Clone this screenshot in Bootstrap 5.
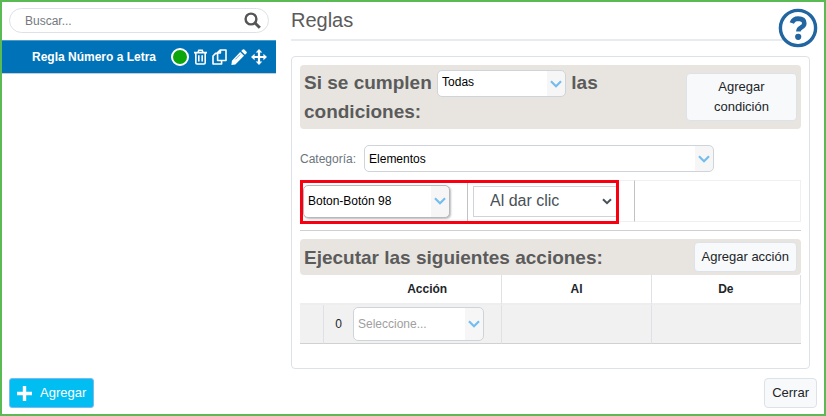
<!DOCTYPE html>
<html lang="es">
<head>
<meta charset="utf-8">
<meta name="viewport" content="width=device-width, initial-scale=1">
<title>Reglas</title>
<link href="https://cdn.jsdelivr.net/npm/bootstrap@5.3.0/dist/css/bootstrap.min.css" rel="stylesheet">
<style>
body { font-family: "Liberation Sans", Arial, sans-serif; font-size: 12px; line-height: 18px; color: #212529; }
.frame { border: 2px solid #5abb55; }
.side { padding-top: 6px; }
.search-box { margin: 0 7px; border: 1px solid #dee2e6; height: 25px; padding: 0 7px 0 15px; }
.search-box input { font-size: 12px; color: #6c757d; outline: 0; min-width: 0; }
.search-box input::placeholder { color: #75797d; opacity: 1; }
.rule-item { margin-top: 7px; height: 34px; background: #0072b8; border-top: 1px solid #4a9aca; border-bottom: 1px solid #c5cbd0; padding: 0 9px 0 30px; }
.icon-btn { background: none; border: 0; padding: 0; color: #fff; line-height: 0; }
.state-dot { width: 18px; height: 18px; border-radius: 50%; border: 2px solid #fff; background: #0ca50c; }
.btn-add { background: #00bdf2; border: 1px solid #7fb8f0; border-radius: 3px; color: #fff; font-size: 13px; line-height: 18px; padding: 5px 7px; }
.btn-soft { background: #f8f9fa; border: 1px solid #dde2e8; border-radius: 4px; color: #212529; font-size: 13px; line-height: 20px; padding: 4px 7px; }
.btn-wrap { width: 111px; padding: 3px 16px; }
.main { padding: 0 14px 0 15px; }
.title { font-size: 20px; line-height: 24px; color: #5b5b5b; border-bottom: 2px solid #e9ecef; padding: 6px 0 7px; margin: 0 24px 15px 0; font-weight: 400; }
.help { position: absolute; top: 6px; right: 6px; color: #2166a0; }
.panel { border: 1px solid #dee2e6; border-radius: 4px; padding: 8px 8px 24px; }
.bar { background: #e8e5e0; border-radius: 4px; padding: 3px 4px; }
.bar h2 { font-size: 19px; line-height: 29px; font-weight: 700; color: #5b5b5b; margin: 0; }
.pick { appearance: none; border: 1px solid #ced4da; border-radius: 5px; font-size: 12px; line-height: 16px; padding: 0 24px 0 4px; height: 27px; color: #000; vertical-align: middle;
  background: url("data:image/svg+xml,%3Csvg xmlns='http://www.w3.org/2000/svg' viewBox='0 0 12 8'%3E%3Cpath d='M1 1.200l5 5 5-5' fill='none' stroke='%2374bdee' stroke-width='2.200'/%3E%3C/svg%3E") no-repeat right 3px center / 12px 8px, linear-gradient(#f6f6f6, #f6f6f6) no-repeat right / 18px 100%, #fff; }
.pick-all { width: 129px; font-weight: 400; padding-bottom: 3px; }
.pick-cat { width: 350px; }
.pick-el { width: 147px; height: 33px; border-color: #b5b9bd; box-shadow: 1px 1px 2px #bbb; }
.pick-act { width: 131px; height: 34px; color: #a0a0a0; }
.pick-event { appearance: none; width: 146px; height: 31px; border: 1px solid #ced4da; font-size: 16px; color: #495057; padding: 0 16px;
  background: url("data:image/svg+xml,%3Csvg xmlns='http://www.w3.org/2000/svg' viewBox='0 0 10 7'%3E%3Cpath d='M1 1.200l4 4 4-4' fill='none' stroke='%23495057' stroke-width='2'/%3E%3C/svg%3E") no-repeat right 6px center / 10px 7px #fff; }
.cat-row { color: #6c757d; padding: 16px 0 8px; }
.conditions { border-bottom: 1px solid #ced0d2; padding-bottom: 8px; margin-bottom: 8px; }
.grid-table { table-layout: fixed; width: 100%; border-collapse: separate; border-spacing: 0; }
.cond-cell { height: 42px; padding: 0 5px; border: 1px solid #f0f0f0; border-left-color: #c0c2c4; border-right: 0; }
.cond-cell:first-child { border-left: 0; padding-left: 3px; }
.cond-cell:last-child { border-right: 1px solid #f0f0f0; }
.highlight { position: absolute; top: 0; left: 0; width: 319px; height: 44px; border: 3px solid #f80010; pointer-events: none; }
.actions-table th { height: 30px; padding: 0; text-align: center; border-right: 1px solid #dee2e6; border-bottom: 2px solid #eee; }
.actions-table td { height: 39px; background: #f1f1f1; border-right: 1px solid #dee2e6; border-bottom: 1px solid #cfd1d3; padding: 0; }
.actions-table .flush { border-right: 0; }
.c-handle { width: 24px; } .c-index { width: 29px; }
.foot { padding: 8px 7px 6px; }
</style>
</head>
<body>
<div class="frame min-vh-100 d-flex flex-column position-relative">
  <div class="row g-0 flex-grow-1">
    <aside class="col-4 side">
      <div class="search-box rounded-pill d-flex align-items-center">
        <input class="border-0 bg-transparent flex-grow-1 p-0" type="search" placeholder="Buscar..." aria-label="Buscar">
        <button class="icon-btn" type="button" aria-label="Buscar"><svg width="17" height="17" viewBox="0 0 17 17" fill="none" stroke="#555"><circle cx="7" cy="7" r="5.400" stroke-width="2.400"/><path d="M11 11l4.800 4.800" stroke-width="3"/></svg></button>
      </div>
      <div class="rule-item d-flex align-items-center text-white">
        <strong class="flex-grow-1 text-nowrap">Regla Número a Letra</strong>
        <div class="d-flex align-items-center gap-1">
          <span class="state-dot"></span>
          <button class="icon-btn" type="button" aria-label="Eliminar"><svg width="15" height="16" viewBox="0 0 15 16" fill="none" stroke="currentColor" stroke-width="1.6"><path d="M1 3.6h13M5 3.4l.8-2.2h3.400l.8 2.2M2.800 3.800v10q0 1.200 1.200 1.200h7q1.200 0 1.200-1.200v-10M5.800 6.200v6.200M9.200 6.200v6.200"/></svg></button>
          <button class="icon-btn" type="button" aria-label="Copiar"><svg width="15" height="16" viewBox="0 0 15 16" fill="none" stroke="currentColor" stroke-width="1.6" stroke-linejoin="round"><path d="M8.200 1H14v10.500H5.600V3.600zM8.400 1v3H5.600M5.400 4.400H3.600L1 7v8h8.600v-3.200"/></svg></button>
          <button class="icon-btn" type="button" aria-label="Editar"><svg width="16" height="16" viewBox="0 0 16 16" fill="currentColor"><path d="M9.200 3l3.800 3.800-8.600 8.600-4 .5.5-4.200zM10.200 2l1.500-1.500q.8-.7 1.600 0l2.200 2.200q.7.8 0 1.600L14 5.800z"/><path d="M4.300 10.400l4.900-4.900" stroke="#0072b8" stroke-width=".6"/></svg></button>
          <button class="icon-btn" type="button" aria-label="Mover"><svg width="16" height="16" viewBox="0 0 16 16" fill="currentColor"><path d="M8 0l3.300 3.600H9.100v3.300h3.300V4.700L16 8l-3.600 3.300V9.100H9.100v3.300h2.200L8 16l-3.300-3.600h2.200V9.100H3.600v2.200L0 8l3.600-3.300v2.200h3.300V3.600H4.700z"/></svg></button>
        </div>
      </div>
    </aside>
    <main class="col-8 main">
      <h1 class="title">Reglas</h1>
      <button class="icon-btn help" type="button" aria-label="Ayuda"><svg width="40" height="40" viewBox="0 0 40 40" fill="none" stroke="currentColor"><circle cx="20" cy="20" r="17.600" fill="#fff" stroke-width="3.400"/><path d="M13.800 15q1.800-4.400 6.300-4.400 6.200.2 6.200 4.600 0 2.600-3.200 4.400Q20.400 21 20.400 23.600" stroke-width="4.600"/><circle cx="20.200" cy="28.800" r="3.100" fill="currentColor" stroke="none"/></svg></button>
      <section class="panel">
        <div class="bar d-flex align-items-center justify-content-between">
          <h2><label for="match">Si se cumplen</label> <select id="match" class="pick pick-all"><option>Todas</option></select> las<br>condiciones:</h2>
          <button class="btn btn-soft btn-wrap" type="button">Agregar condición</button>
        </div>
        <div class="cat-row d-flex align-items-center gap-2">
          <label for="category">Categoría:</label>
          <select id="category" class="pick pick-cat"><option>Elementos</option></select>
        </div>
        <div class="conditions position-relative">
          <table class="grid-table">
            <tbody><tr>
              <td class="cond-cell"><select class="pick pick-el" aria-label="Elemento"><option>Boton-Botón 98</option></select></td>
              <td class="cond-cell"><select class="pick-event" aria-label="Evento"><option>Al dar clic</option></select></td>
              <td class="cond-cell"></td>
            </tr></tbody>
          </table>
          <div class="highlight"></div>
        </div>
        <div class="bar d-flex align-items-center justify-content-between">
          <h2>Ejecutar las siguientes acciones:</h2>
          <button class="btn btn-soft" type="button">Agregar acción</button>
        </div>
        <table class="grid-table actions-table">
          <colgroup><col class="c-handle"><col class="c-index"><col><col><col></colgroup>
          <thead><tr><th class="flush"></th><th class="flush"></th><th>Acción</th><th>Al</th><th>De</th></tr></thead>
          <tbody><tr><td></td><td class="flush text-center">0</td><td><select class="pick pick-act" aria-label="Acción"><option>Seleccione...</option></select></td><td></td><td class="flush"></td></tr></tbody>
        </table>
      </section>
    </main>
  </div>
  <footer class="foot d-flex justify-content-between align-items-center">
    <button class="btn btn-add d-flex align-items-center gap-2" type="button"><svg width="15" height="15" viewBox="0 0 15 15" stroke="currentColor" stroke-width="3.400"><path d="M7.500 0v15M0 7.500h15"/></svg>Agregar</button>
    <button class="btn btn-soft" type="button">Cerrar</button>
  </footer>
</div>
<script src="https://cdn.jsdelivr.net/npm/bootstrap@5.3.0/dist/js/bootstrap.bundle.min.js"></script>
</body>
</html>
